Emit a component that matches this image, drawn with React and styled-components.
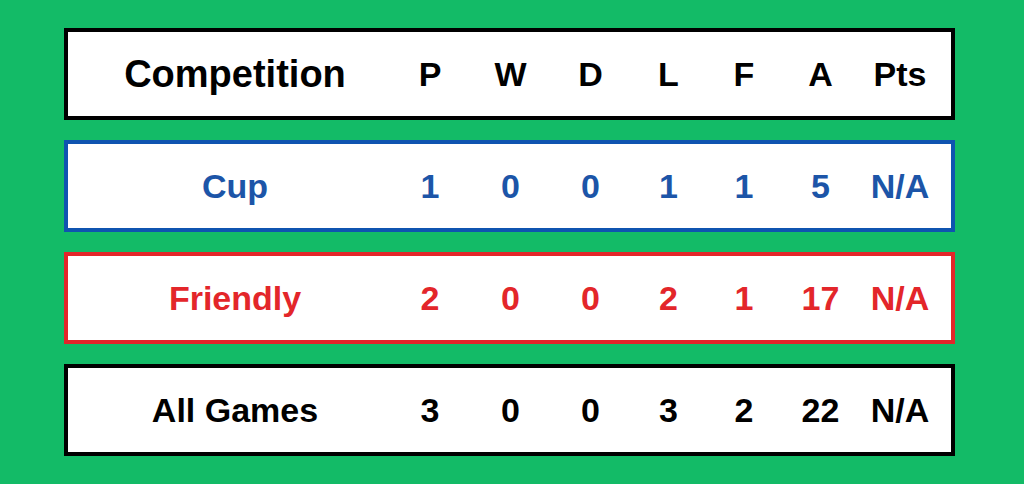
import React from 'react';
import styled, { createGlobalStyle } from 'styled-components';

const GlobalStyle = createGlobalStyle`
    html, body {
        margin: 0;
        padding: 0;
        background: #13bb67;
    }
    body {
        font-family: "Liberation Sans", Arial, sans-serif;
    }
`;

const colors = {
    head: { border: '#000000', text: '#000000' },
    cup: { border: '#0f54b0', text: '#1c55a8' },
    friendly: { border: '#e3262a', text: '#e3262a' },
    all: { border: '#000000', text: '#000000' }
};

const Page = styled.div`
    width: 1024px;
    height: 484px;
    box-sizing: border-box;
    padding: 28px 0 0 64px;
    display: flex;
    flex-direction: column;
    gap: 20px;
`;

const Row = styled.div`
    width: 891px;
    height: 92px;
    box-sizing: border-box;
    background: #ffffff;
    border: 4px solid ${p => p.$border};
    color: ${p => p.$color};
    display: grid;
    grid-template-columns: 322px 80px 81px 79px 77px 74px 79px 80px;
    align-items: center;
    font-weight: 700;
    font-size: 34px;
`;

const Label = styled.div`
    padding-left: 12px;
    text-align: center;
    font-size: ${p => (p.$big ? '38px' : '34px')};
`;

const Cell = styled.div`
    text-align: center;
`;

const headers = ['P', 'W', 'D', 'L', 'F', 'A', 'Pts'];

const rows = [
    { key: 'cup', label: 'Cup', values: ['1', '0', '0', '1', '1', '5', 'N/A'] },
    { key: 'friendly', label: 'Friendly', values: ['2', '0', '0', '2', '1', '17', 'N/A'] },
    { key: 'all', label: 'All Games', values: ['3', '0', '0', '3', '2', '22', 'N/A'] }
];

const App = () => (
    <>
        <GlobalStyle />
        <Page>
            <Row $border={colors.head.border} $color={colors.head.text}>
                <Label $big>Competition</Label>
                {headers.map(h => (
                    <Cell key={h}>{h}</Cell>
                ))}
            </Row>
            {rows.map(r => (
                <Row key={r.key} $border={colors[r.key].border} $color={colors[r.key].text}>
                    <Label>{r.label}</Label>
                    {r.values.map((v, i) => (
                        <Cell key={i}>{v}</Cell>
                    ))}
                </Row>
            ))}
        </Page>
    </>
);

export default App;
